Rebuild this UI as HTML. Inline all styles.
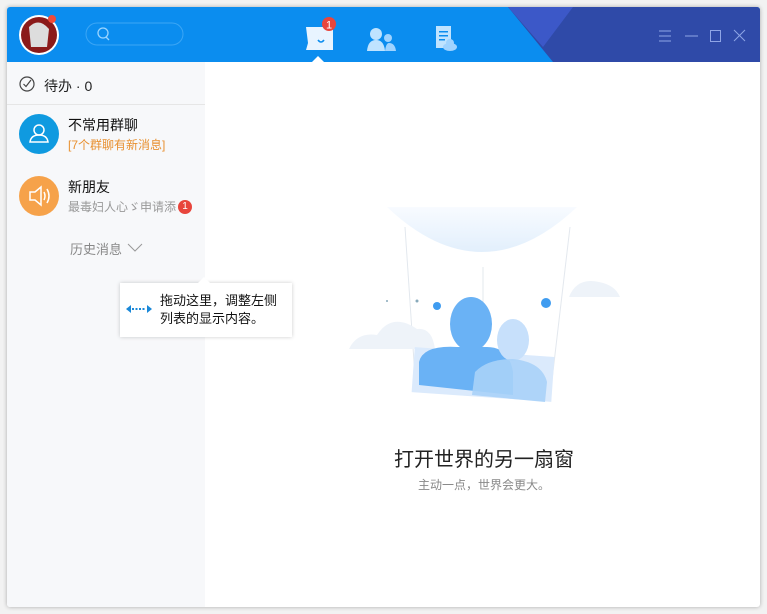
<!DOCTYPE html>
<html><head><meta charset="utf-8"><style>
*{margin:0;padding:0;box-sizing:border-box}
body{width:767px;height:614px;background:#f2f2f2;position:relative;overflow:hidden;font-family:"Liberation Sans","Noto Sans CJK SC",sans-serif}
.win{position:absolute;left:7px;top:7px;width:753px;height:600px;background:#fff;box-shadow:0 0 4px rgba(0,0,0,.3);border-radius:3px;overflow:hidden}
.hdr{position:absolute;left:0;top:0;width:753px;height:55px;background:#0b8def}
.side{position:absolute;left:0;top:55px;width:198px;height:545px;background:#f7f8fa}
.abs{position:absolute}
</style></head><body>
<div class="win">
<div class="hdr">
<svg class="abs" style="left:0;top:0" width="753" height="55">
<polygon points="501,0 753,0 753,55 546,55" fill="#2f4aa8"/>
<polygon points="501,0 566,0 536,40" fill="#3c58c8"/>
<circle cx="32" cy="28" r="20" fill="#fff"/>
<circle cx="32" cy="28" r="18" fill="#8b1a1a"/>
<path d="M22 20 Q32 10 42 22 L40 40 L24 40 Z" fill="#ddd"/>
<circle cx="45" cy="12" r="4" fill="#f04a3a"/>
<rect x="79" y="16" width="97" height="22" rx="11" fill="none" stroke="#3ca6f5" stroke-width="1"/>
<circle cx="96" cy="26" r="5" fill="none" stroke="#9ad4ff" stroke-width="1.3"/>
<line x1="99" y1="30" x2="102" y2="33" stroke="#9ad4ff" stroke-width="1.3"/>
<path d="M299 20 L326 20 L326 43 L299 43 L301 36 Z" fill="#e8f4ff"/>
<path d="M311 33 Q314 37 317 33" stroke="#0b8def" stroke-width="1.6" fill="none"/>
<circle cx="322" cy="17" r="7" fill="#e8453c"/>
<text x="322" y="21.5" font-size="11" fill="#fff" text-anchor="middle">1</text>
<circle cx="369" cy="27" r="6" fill="#bfe3ff"/><path d="M360 44 Q361 33 369 33 Q377 33 378 44Z" fill="#bfe3ff"/>
<circle cx="381" cy="31" r="4" fill="#9fd3ff"/><path d="M378 44 Q379 36 382 36 Q388 36 389 44Z" fill="#9fd3ff"/>
<rect x="429" y="19" width="15" height="22" fill="#bfe3ff"/>
<rect x="432" y="24" width="9" height="1.5" fill="#0b8def"/><rect x="432" y="28" width="9" height="1.5" fill="#0b8def"/><rect x="432" y="32" width="6" height="1.5" fill="#0b8def"/>
<ellipse cx="443" cy="40" rx="7" ry="4" fill="#9fd3ff"/><circle cx="443" cy="36" r="4" fill="#9fd3ff"/>
<polygon points="305,55 311,49 317,55" fill="#fff"/>
<g stroke="#8fa5e6" stroke-width="1" fill="none">
<line x1="652" y1="24" x2="664" y2="24"/><line x1="652" y1="29" x2="664" y2="29"/><line x1="652" y1="34" x2="664" y2="34"/>
<line x1="678" y1="29" x2="691" y2="29"/>
<rect x="703.5" y="23.5" width="10" height="11"/>
<line x1="727" y1="23" x2="738" y2="34"/><line x1="738" y1="23" x2="727" y2="34"/>
</g>
</svg>
</div>
<div class="side">
<svg class="abs" style="left:12px;top:14px" width="16" height="16"><circle cx="8" cy="8" r="7" fill="none" stroke="#444" stroke-width="1.2"/><path d="M4.5 8 L7 10.5 L12 4" stroke="#444" stroke-width="1.2" fill="none"/></svg>
<div class="abs" style="left:37px;top:14px;font-size:14px;color:#222">待办 · 0</div>
<div class="abs" style="left:0;top:42px;width:198px;height:1px;background:#e6e6e6"></div>
<div class="abs" style="left:12px;top:52px;width:40px;height:40px;border-radius:50%;background:#0f9ae0"></div>
<svg class="abs" style="left:12px;top:52px" width="40" height="40"><circle cx="20" cy="16" r="5" fill="none" stroke="#fff" stroke-width="1.5"/><path d="M11 28 Q12 21 20 21 Q28 21 29 28Z" fill="none" stroke="#fff" stroke-width="1.5"/></svg>
<div class="abs" style="left:61px;top:53px;font-size:14px;color:#111">不常用群聊</div>
<div class="abs" style="left:61px;top:74px;font-size:12px;color:#e89030">[7个群聊有新消息]</div>
<div class="abs" style="left:12px;top:114px;width:40px;height:40px;border-radius:50%;background:#f6a24a"></div>
<svg class="abs" style="left:12px;top:114px" width="40" height="40"><path d="M11 16 L16 16 L22 11 L22 29 L16 24 L11 24Z" fill="none" stroke="#fff" stroke-width="1.5"/><path d="M25 16 Q27 20 25 24 M28 13 Q32 20 28 27" fill="none" stroke="#fff" stroke-width="1.5"/></svg>
<div class="abs" style="left:61px;top:115px;font-size:14px;color:#111">新朋友</div>
<div class="abs" style="left:61px;top:136px;font-size:12px;color:#999">最毒妇人心ゞ申请添</div>
<div class="abs" style="left:171px;top:138px;width:14px;height:14px;border-radius:50%;background:#e8453c;color:#fff;font-size:10px;text-align:center;line-height:14px">1</div>
<div class="abs" style="left:63px;top:177px;font-size:13px;color:#888">历史消息</div>
<svg class="abs" style="left:120px;top:181px" width="16" height="10"><path d="M1 1 L8 8 L15 1" stroke="#999" fill="none"/></svg>
</div>
<div class="abs" style="left:113px;top:276px;width:172px;height:54px;background:#fff;box-shadow:0 0 4px rgba(0,0,0,.2)"></div>
<svg class="abs" style="left:190px;top:269px" width="14" height="8"><polygon points="0,8 7,1 14,8" fill="#fff"/></svg>
<svg class="abs" style="left:118px;top:296px" width="28" height="12"><path d="M1 6 L6 2 L6 10Z M27 6 L22 2 L22 10Z" fill="#1a88d8"/><path d="M7 6 H21" stroke="#1a88d8" stroke-width="2" stroke-dasharray="2 1.5"/></svg>
<div class="abs" style="left:153px;top:285px;font-size:13px;color:#111;line-height:18px">拖动这里，调整左侧<br>列表的显示内容。</div>
<svg class="abs" style="left:330px;top:190px" width="310" height="220">
<defs><linearGradient id="b" x1="0" y1="0" x2="0" y2="1"><stop offset="0" stop-color="#f8fbff"/><stop offset="1" stop-color="#e2effc"/></linearGradient></defs>
<path d="M50 10 Q145 100 240 10 Z" fill="url(#b)"/>
<g stroke="#e3e8ee" stroke-width="1"><line x1="68" y1="30" x2="78" y2="180"/><line x1="233" y1="30" x2="213" y2="200"/><line x1="146" y1="70" x2="146" y2="150"/></g>
<path d="M12 152 Q20 135 40 138 Q55 115 80 132 Q95 130 98 152Z" fill="#eef3f9"/>
<path d="M232 100 Q240 80 262 85 Q278 88 283 100Z" fill="#eef3f9"/>
<rect x="76" y="155" width="140" height="45" fill="#dbeafc" transform="rotate(4 146 178)"/>
<ellipse cx="134" cy="127" rx="21" ry="27" fill="#6ab2f5"/>
<path d="M82 165 Q86 148 120 150 L150 150 Q172 150 176 175 L176 198 L82 188Z" fill="#6ab2f5"/>
<ellipse cx="176" cy="143" rx="16" ry="21" fill="#c7e0fb"/>
<path d="M138 175 Q150 162 176 162 Q205 165 210 185 L208 205 L135 198Z" fill="#a9d1f8" opacity=".9"/>
<circle cx="100" cy="109" r="4" fill="#3f9cf0"/><circle cx="209" cy="106" r="5" fill="#3f9cf0"/>
<circle cx="80" cy="104" r="1.5" fill="#8ab"/><circle cx="50" cy="104" r="1" fill="#8ab"/>
</svg>
<div class="abs" style="left:387px;top:436px;font-size:20px;color:#222;white-space:nowrap">打开世界的另一扇窗</div>
<div class="abs" style="left:411px;top:469px;font-size:12px;color:#888">主动一点，世界会更大。</div>
</div>
</body></html>
